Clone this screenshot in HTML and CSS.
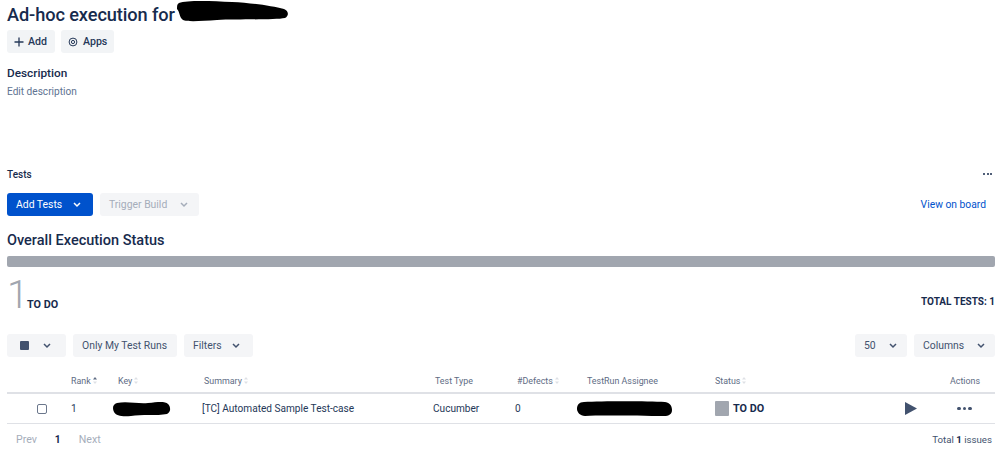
FILE: index.html
```html
<!DOCTYPE html>
<html lang="en">
<head>
<meta charset="utf-8">
<title>Ad-hoc execution</title>
<link rel="stylesheet" href="styles.css">
</head>
<body>
<main class="page">
  <h1 class="title">Ad-hoc execution for<svg class="blot-title" width="112" height="22" viewBox="0 0 112 22"><path d="M2 3C10 0 35 1 55 2C75 3 95 6 107 9C112 11 112 16 108 18C98 20 60 19 40 20C25 21 10 22 6 20C2 17 3 12 0 9C0 6 0 4 2 3Z"/></svg></h1>
  <div class="chips">
    <button class="chip chip-add"><svg width="12" height="12" viewBox="0 0 12 12"><path d="M6 1.5v9M1.5 6h9" class="stroke"/></svg>Add</button>
    <button class="chip chip-apps"><svg width="12" height="12" viewBox="0 0 12 12"><circle cx="6" cy="6" r="3.9" class="thin"/><circle cx="6" cy="6" r="1.6" class="thin"/></svg>Apps</button>
  </div>
  <h2 class="desc-head">Description</h2>
  <p class="desc-edit">Edit description</p>

  <div class="tests-head"><span>Tests</span><span class="more-small"><i></i><i></i><i></i></span></div>

  <div class="action-row">
    <button class="btn btn-primary">Add Tests<svg class="chev" width="10" height="8" viewBox="0 0 10 8"><path d="M2 2l3 3 3-3"/></svg></button>
    <button class="btn btn-disabled">Trigger Build<svg class="chev" width="10" height="8" viewBox="0 0 10 8"><path d="M2 2l3 3 3-3"/></svg></button>
    <a class="board-link">View on board</a>
  </div>

  <h2 class="overall">Overall Execution Status</h2>
  <div class="bar"></div>

  <div class="summary">
    <div class="summary-left"><span class="big-num">1</span><span class="big-label">TO DO</span></div>
    <span class="total-tests">TOTAL TESTS: 1</span>
  </div>

  <div class="toolbar">
    <button class="btn btn-plain btn-square"><span class="swatch"></span><svg class="chev" width="10" height="8" viewBox="0 0 10 8"><path d="M2 2l3 3 3-3"/></svg></button>
    <button class="btn btn-plain btn-only">Only My Test Runs</button>
    <button class="btn btn-plain btn-filters">Filters<svg class="chev" width="10" height="8" viewBox="0 0 10 8"><path d="M2 2l3 3 3-3"/></svg></button>
    <span class="spacer"></span>
    <button class="btn btn-plain btn-size">50<svg class="chev" width="10" height="8" viewBox="0 0 10 8"><path d="M2 2l3 3 3-3"/></svg></button>
    <button class="btn btn-plain btn-columns">Columns<svg class="chev" width="10" height="8" viewBox="0 0 10 8"><path d="M2 2l3 3 3-3"/></svg></button>
  </div>

  <div class="grid grid-head">
    <span></span>
    <span>Rank<svg class="sort" width="4" height="7" viewBox="0 0 4 7"><path d="M2 0L4 2.5H0z" class="up"/><path d="M2 7L4 4.5H0z" class="down"/></svg></span>
    <span>Key<svg class="sort" width="4" height="7" viewBox="0 0 4 7"><path d="M2 0L4 2.5H0z" class="down"/><path d="M2 7L4 4.5H0z" class="down"/></svg></span>
    <span class="pad2">Summary<svg class="sort" width="4" height="7" viewBox="0 0 4 7"><path d="M2 0L4 2.5H0z" class="down"/><path d="M2 7L4 4.5H0z" class="down"/></svg></span>
    <span class="pad2">Test Type</span>
    <span class="pad2">#Defects<svg class="sort" width="4" height="7" viewBox="0 0 4 7"><path d="M2 0L4 2.5H0z" class="down"/><path d="M2 7L4 4.5H0z" class="down"/></svg></span>
    <span class="pad10">TestRun Assignee</span>
    <span>Status<svg class="sort" width="4" height="7" viewBox="0 0 4 7"><path d="M2 0L4 2.5H0z" class="down"/><path d="M2 7L4 4.5H0z" class="down"/></svg></span>
    <span class="right">Actions</span>
  </div>
  <div class="grid grid-row">
    <span class="cb-cell"><span class="checkbox"></span></span>
    <span>1</span>
    <span><svg class="blot-key" width="58" height="16" viewBox="0 0 58 16"><path d="M4 2C14 0 25 3 35 2C45 1 52 0 55 3C58 6 58 11 54 13C44 15 28 13 18 15C10 16 3 15 1 11C-1 7 0 3 4 2Z"/></svg></span>
    <span>[TC] Automated Sample Test-case</span>
    <span>Cucumber</span>
    <span>0</span>
    <span><svg class="blot-name" width="95" height="16" viewBox="0 0 95 16"><path d="M7 1C25 0 70 0 88 1C94 2 95 6 95 9C95 13 92 15 87 15C65 15 25 14 8 15C3 15 0 11 0 8C0 4 2 1 7 1Z"/></svg></span>
    <span class="status"><span class="status-box"></span>TO DO</span>
    <span class="actions">
      <svg width="12" height="13" viewBox="0 0 12 13"><path d="M0 0l12 6.5L0 13z" class="fill"/></svg>
      <span class="more"><i></i><i></i><i></i></span>
    </span>
  </div>

  <div class="pager">
    <span class="pager-off">Prev</span><span class="pager-on">1</span><span class="pager-off">Next</span>
    <span class="spacer"></span>
    <span class="pager-total">Total <b>1</b> issues</span>
  </div>
</main>
</body>
</html>
```
FILE: styles.css
```css
* { box-sizing: border-box; }
html, body { margin: 0; background: #fff; }
body { font-family: Roboto, "Noto Sans", sans-serif; color: #172b4d; overflow: hidden; }
.page { width: 999px; height: 453px; padding: 0 4px 0 7px; }
button { border: 0; font: inherit; padding: 0; }

.title { margin: 0; height: 30px; font-size: 18.2px; letter-spacing: -0.1px; font-weight: 500; line-height: 30px; display: flex; align-items: center; }
.blot-title { margin: -8px 0 0 2px; flex: none; }
svg path { fill: #000; }
.chips { display: flex; gap: 6px; height: 23px; }
.chip { display: flex; align-items: center; gap: 3px; padding-left: 6px; background: #f2f4f6; border-radius: 3px; font-size: 10.6px; font-weight: 500; color: #253858; }
.chip-add { width: 48px; }
.chip-apps { width: 53px; gap: 4px; padding-left: 6px; }
.chip svg .stroke { fill: none; stroke: #253858; stroke-width: 1.3; }
.chip svg .thin { fill: none; stroke: #253858; stroke-width: 1; }
.desc-head { margin: 12px 0 0; font-size: 11.8px; line-height: 16px; font-weight: 500; }
.desc-edit { margin: 3px 0 0; font-size: 10.1px; line-height: 15px; color: #5e7391; }

.tests-head { display: flex; justify-content: space-between; align-items: center; height: 14px; margin-top: 68px; font-size: 10px; font-weight: 500; }
.more-small { display: flex; gap: 1.5px; margin-right: 3px; }
.more-small i { width: 2px; height: 2px; border-radius: 50%; background: #172b4d; }

.action-row { display: flex; gap: 7px; height: 23px; margin-top: 12px; align-items: center; }
.btn { display: inline-flex; align-items: center; height: 23px; padding: 0 9px; border-radius: 3px; font-family: Roboto, sans-serif; font-size: 10.4px; white-space: nowrap; }
.chev { margin-left: 8px; flex: none; }
.chev path { fill: none; stroke: currentColor; stroke-width: 1.5; }
.btn-primary { width: 86px; background: #0052cc; color: #fff; }
.btn-primary .chev { margin-left: 10px; }
.btn-disabled { width: 99px; background: #f4f5f7; color: #a5adba; }
.btn-disabled .chev { margin-left: 12px; }
.board-link { margin-left: auto; margin-right: 9px; color: #0052cc; font-size: 10.3px; }

.overall { margin: 15px 0 0; font-size: 14.5px; line-height: 20px; font-weight: 500; }
.bar { height: 11px; margin-top: 5px; background: #a1a6af; border-radius: 2px; }

.summary { display: flex; justify-content: space-between; align-items: flex-start; height: 46px; }
.summary-left { display: flex; align-items: flex-start; }
.big-num { font-weight: 300; font-size: 39px; line-height: 46px; margin-top: 5px; color: #a1a6af; width: 20px; height: 41px; }
.big-label { font-size: 10.8px; font-weight: 700; line-height: 13px; margin-top: 31px; }
.total-tests { font-size: 10px; font-weight: 700; line-height: 13px; margin-top: 28px; }

.toolbar { display: flex; gap: 7px; height: 23px; margin-top: 21px; }
.btn-plain { background: #f4f5f7; color: #42526e; }
.btn-square { width: 59px; padding-left: 13px; }
.btn-square .chev { margin-left: 13px; }
.swatch { width: 9px; height: 9px; background: #42526e; border-radius: 1px; }
.btn-only { width: 104px; }
.btn-filters { width: 69px; }
.btn-filters .chev { margin-left: 9px; }
.btn-size { width: 52px; }
.btn-size .chev { margin-left: 12px; }
.btn-columns { width: 81px; }
.btn-columns .chev { margin-left: 12px; }
.spacer { flex: 1; }

.grid { display: grid; align-items: center; }
.grid-head { height: 25px; margin-top: 12px; border-bottom: 2px solid #dfe1e6; font-size: 8.9px; color: #5e6c84; grid-template-columns: 64px 47px 84px 231px 82px 62px 138px 1fr 60px; }
.grid-row { height: 30px; border-bottom: 1px solid #dfe1e6; font-size: 10.1px; color: #253858; grid-template-columns: 64px 47px 84px 231px 82px 62px 138px 1fr 90px; }
.sort { margin-left: 2px; }
.sort .up { fill: #5e6c84; }
.sort .down { fill: #dfe1e6; }
.pad2 { padding-left: 2px; }
.pad10 { padding-left: 10px; }
.right { text-align: right; padding-right: 15px; }
.cb-cell { display: flex; padding-left: 30px; }
.checkbox { width: 10px; height: 10px; border: 1px solid #6b778c; border-radius: 2px; }
.blot-key { display: block; margin-left: -5px; }
.blot-name { display: block; }
.status { display: flex; align-items: center; gap: 4px; font-weight: 700; color: #172b4d; font-size: 10.8px; }
.status-box { width: 14px; height: 15px; background: #a1a6af; border-radius: 1px; }
.actions { display: flex; align-items: center; gap: 40px; }
.fill { fill: #42526e; }
.more { display: flex; gap: 2px; }
.more i { width: 3.5px; height: 3.5px; border-radius: 50%; background: #42526e; }

.pager { display: flex; align-items: center; height: 30px; padding: 1px 3px 0 9px; font-size: 10.2px; }
.pager-off { color: #a5adba; font-size: 10.6px; }
.pager-on { margin: 0 18px; font-weight: 700; color: #172b4d; }
.pager-total { color: #42526e; font-size: 9.7px; }
.pager-total b { color: #172b4d; }
```
